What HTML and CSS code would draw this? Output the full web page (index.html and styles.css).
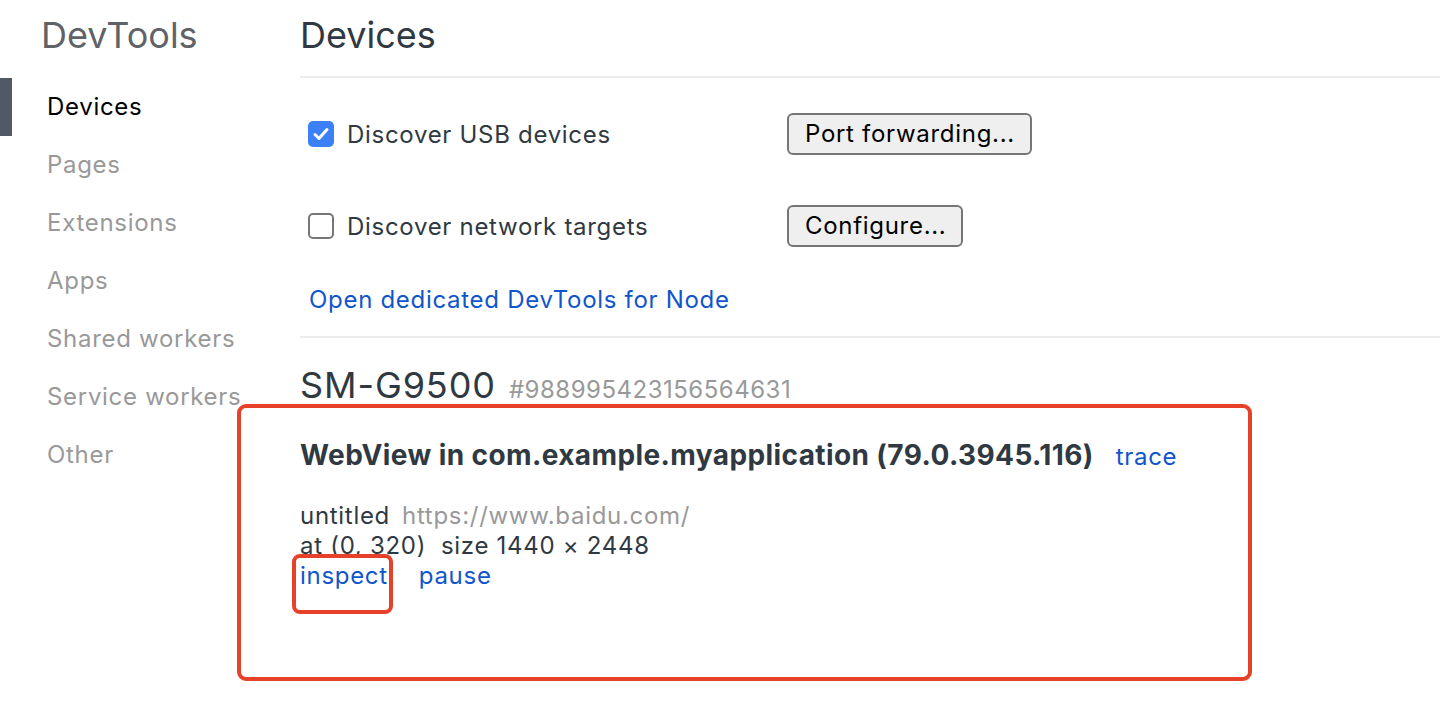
FILE: index.html
```html
<!DOCTYPE html>
<html>
<head>
<meta charset="utf-8">
<link rel="stylesheet" href="styles.css">
</head>
<body>
<div class="page">
  <aside class="sidebar">
    <div class="brand">DevTools</div>
    <nav class="nav">
      <div class="nav-item active">Devices</div>
      <div class="nav-item">Pages</div>
      <div class="nav-item">Extensions</div>
      <div class="nav-item">Apps</div>
      <div class="nav-item">Shared workers</div>
      <div class="nav-item">Service workers</div>
      <div class="nav-item">Other</div>
    </nav>
  </aside>
  <main class="main">
    <header class="header"><h1 class="title">Devices</h1></header>
    <section class="settings">
      <div class="row">
        <label class="check"><span class="box checked"><svg viewBox="0 0 26 26" width="26" height="26"><path d="M7 13.5l4 4 8-9" fill="none" stroke="#fff" stroke-width="3" stroke-linecap="round" stroke-linejoin="round"/></svg></span>Discover USB devices</label>
        <button class="btn">Port forwarding...</button>
      </div>
      <div class="row">
        <label class="check"><span class="box"></span>Discover network targets</label>
        <button class="btn">Configure...</button>
      </div>
      <a class="link node-link">Open dedicated DevTools for Node</a>
    </section>
    <section class="device">
      <div class="device-head"><span class="device-name">SM-G9500</span><span class="serial">#988995423156564631</span></div>
      <div class="browser">
        <div class="browser-head"><span class="browser-name">WebView in com.example.myapplication (79.0.3945.116)</span><a class="link">trace</a></div>
        <div class="target">
          <div><span>untitled</span><span class="url">https://www.baidu.com/</span></div>
          <div>at (0, 320)&nbsp; size 1440 × 2448</div>
          <div class="actions"><a class="link">inspect</a><a class="link">pause</a></div>
        </div>
      </div>
    </section>
  </main>
</div>
<div class="mark mark-big"></div>
<div class="mark mark-small"></div>
</body>
</html>
```

FILE: styles.css
```css
html, body {
  margin: 0;
  padding: 0;
  background: #fff;
}
body {
  font-family: Inter, "Noto Sans", sans-serif;
  color: #303942;
  width: 1440px;
  height: 706px;
  overflow: hidden;
  position: relative;
}
.page {
  display: flex;
}
.sidebar {
  width: 300px;
  flex: none;
}
.brand {
  font-size: 36px;
  color: #5f6368;
  padding: 14px 0 0 41px;
  line-height: 43px;
  height: 64px;
}
.nav-item {
  font-size: 24px;
  letter-spacing: 0.7px;
  line-height: 58px;
  height: 58px;
  color: #999;
  border-left: 12px solid transparent;
  padding-left: 35px;
}
.nav-item.active {
  color: #000;
  border-left-color: #525966;
}
.main {
  flex: 1;
}
.header {
  height: 78px;
  border-bottom: 2px solid #ececec;
  box-sizing: border-box;
  padding-top: 14px;
}
.title {
  margin: 0;
  font-weight: normal;
  font-size: 36px;
  line-height: 43px;
  color: #303942;
}
.settings {
  border-bottom: 2px solid #ececec;
  padding-top: 35px;
  padding-bottom: 21px;
}
.row {
  display: flex;
  align-items: center;
  height: 42px;
  margin-bottom: 50px;
}
.row + .row {
  margin-bottom: 38px;
}
.check {
  display: flex;
  align-items: center;
  font-size: 24px;
  letter-spacing: 0.7px;
  width: 479px;
  padding-left: 8px;
  gap: 13px;
  color: #303942;
}
.box {
  width: 26px;
  height: 26px;
  box-sizing: border-box;
  border: 2px solid #767676;
  border-radius: 5px;
  display: block;
}
.box.checked {
  border: none;
  background: #3b80f7;
}
.box svg {
  display: block;
}
.btn {
  font-family: inherit;
  font-size: 24px;
  letter-spacing: 0.7px;
  color: #000;
  background: #efefef;
  border: 2px solid #767676;
  border-radius: 6px;
  height: 42px;
  padding: 0 15px 0 16px;
  line-height: 38px;
}
.link {
  color: #1155cc;
  font-size: 24px;
  letter-spacing: 0.7px;
  cursor: pointer;
}
.node-link {
  display: block;
  padding-left: 9px;
  line-height: 30px;
}
.device {
  padding-top: 26px;
}
.device-head {
  display: flex;
  align-items: baseline;
  gap: 13px;
  line-height: 43px;
}
.device-name {
  font-size: 36px;
  letter-spacing: 0.9px;
  color: #303942;
}
.serial {
  font-size: 24px;
  letter-spacing: 0.5px;
  color: #999;
}
.browser {
  padding-top: 28px;
}
.browser-head {
  display: flex;
  align-items: baseline;
  gap: 22px;
  line-height: 32px;
}
.browser-name {
  font-size: 28px;
  letter-spacing: 0.4px;
  font-weight: bold;
  color: #303942;
}
.target {
  margin-top: 28px;
  font-size: 24px;
  letter-spacing: 0.7px;
  line-height: 30px;
}
.url {
  color: #999;
  margin-left: 12px;
}
.actions {
  display: flex;
  gap: 31px;
}
.mark {
  position: absolute;
  border: 4px solid #e8412a;
  box-sizing: border-box;
}
.mark-big {
  left: 237px;
  top: 404px;
  width: 1015px;
  height: 277px;
  border-radius: 9px;
}
.mark-small {
  left: 292px;
  top: 554px;
  width: 101px;
  height: 60px;
  border-radius: 8px;
}
```
